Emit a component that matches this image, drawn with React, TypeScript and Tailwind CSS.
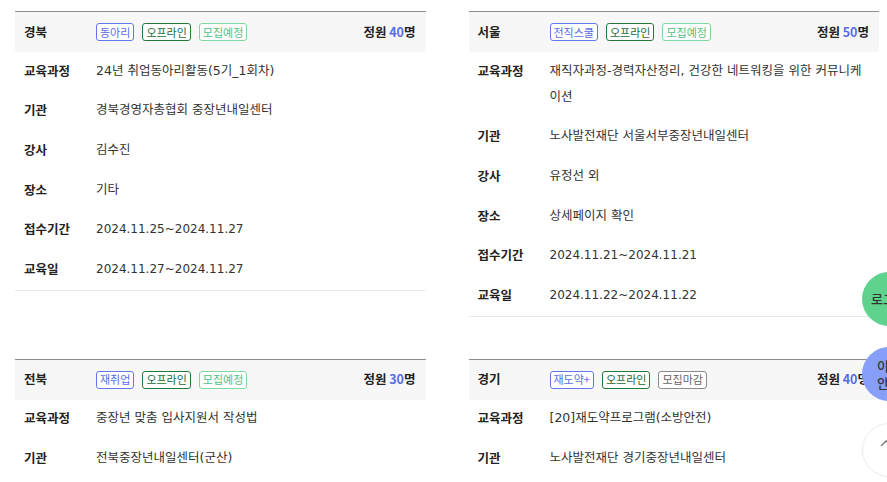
import React from "react";

type Badge = { text: string; tone: "blue" | "green" | "mint" | "gray" };
type Card = {
  region: string;
  badges: Badge[];
  count: string;
  rows: [string, string][];
};

const cards: Card[] = [
  {
    region: "경북",
    badges: [
      { text: "동아리", tone: "blue" },
      { text: "오프라인", tone: "green" },
      { text: "모집예정", tone: "mint" },
    ],
    count: "40",
    rows: [
      ["교육과정", "24년 취업동아리활동(5기_1회차)"],
      ["기관", "경북경영자총협회 중장년내일센터"],
      ["강사", "김수진"],
      ["장소", "기타"],
      ["접수기간", "2024.11.25~2024.11.27"],
      ["교육일", "2024.11.27~2024.11.27"],
    ],
  },
  {
    region: "서울",
    badges: [
      { text: "전직스쿨", tone: "blue" },
      { text: "오프라인", tone: "green" },
      { text: "모집예정", tone: "mint" },
    ],
    count: "50",
    rows: [
      ["교육과정", "재직자과정-경력자산정리, 건강한 네트워킹을 위한 커뮤니케이션"],
      ["기관", "노사발전재단 서울서부중장년내일센터"],
      ["강사", "유정선 외"],
      ["장소", "상세페이지 확인"],
      ["접수기간", "2024.11.21~2024.11.21"],
      ["교육일", "2024.11.22~2024.11.22"],
    ],
  },
  {
    region: "전북",
    badges: [
      { text: "재취업", tone: "blue" },
      { text: "오프라인", tone: "green" },
      { text: "모집예정", tone: "mint" },
    ],
    count: "30",
    rows: [
      ["교육과정", "중장년 맞춤 입사지원서 작성법"],
      ["기관", "전북중장년내일센터(군산)"],
      ["강사", "김선영"],
      ["장소", "전북중장년내일센터(군산)"],
    ],
  },
  {
    region: "경기",
    badges: [
      { text: "재도약+", tone: "blue" },
      { text: "오프라인", tone: "green" },
      { text: "모집마감", tone: "gray" },
    ],
    count: "40",
    rows: [
      ["교육과정", "[20]재도약프로그램(소방안전)"],
      ["기관", "노사발전재단 경기중장년내일센터"],
      ["강사", "홍길동"],
      ["장소", "상세페이지 확인"],
    ],
  },
];

const toneClass: Record<Badge["tone"], string> = {
  blue: "border-[#6577f0] text-[#5a6be6]",
  green: "border-[#217a3c] text-[#1d6a33]",
  mint: "border-[#7fd8a2] text-[#4fbf7f]",
  gray: "border-[#8a8a8a] text-[#666666]",
};

const FONT = '"DejaVu Sans", "Noto Sans CJK KR", sans-serif';
const CJK_FONT = '"Noto Sans CJK KR", sans-serif';

const isDate = (v: string) => /^[0-9.~]+$/.test(v);

function CardView({ card }: { card: Card }) {
  return (
    <div className="border-t border-[#8c8c8c] border-b border-b-[#e8e8e8]">
      <div
        className="flex h-[40px] items-center bg-[#f7f7f7] pl-[9px] pr-[10px]"
        style={{ fontFamily: CJK_FONT }}
      >
        <div className="w-[72px] text-[12.5px] font-bold text-[#222]">{card.region}</div>
        <div className="flex gap-[8px]">
          {card.badges.map((b) => (
            <span
              key={b.text}
              className={`flex h-[18px] items-center rounded-[3px] border bg-white px-[3px] text-[11px] leading-none ${toneClass[b.tone]}`}
            >
              {b.text}
            </span>
          ))}
        </div>
        <div className="ml-auto text-[12.5px] font-bold text-[#222]">
          정원 <span className="text-[#5a6be6]">{card.count}</span>명
        </div>
      </div>
      <div className="pl-[9px] pr-[10px]">
        {card.rows.map(([k, v]) => (
          <div key={k} className="flex pb-[7.8px] pt-[5.8px] text-[12.5px] leading-[26px]">
            <div className="w-[72px] shrink-0 font-bold text-[#222]" style={{ fontFamily: CJK_FONT }}>
              {k}
            </div>
            <div
              className={`min-w-0 flex-1 break-all text-[#333] ${isDate(v) ? "text-[12px]" : "text-[12.5px]"}`}
            >
              {v}
            </div>
          </div>
        ))}
      </div>
    </div>
  );
}

export default function App() {
  return (
    <div
      className="relative h-[482px] w-[887px] overflow-hidden bg-white"
      style={{ fontFamily: FONT }}
    >
      <div className="ml-[15px] grid w-[864px] grid-cols-2 items-start gap-x-[43px] gap-y-[42px] pt-[11px]">
        {cards.map((c) => (
          <CardView key={c.region} card={c} />
        ))}
      </div>

      <div
        className="absolute left-[862px] top-[272px] flex h-[54px] w-[54px] items-center justify-center rounded-full bg-[#5fd28e] text-[13px] font-medium text-[#333]"
        style={{ fontFamily: CJK_FONT }}
      >
        로그인
      </div>
      <div
        className="absolute left-[862px] top-[347px] flex h-[54px] w-[54px] flex-col items-center justify-center rounded-full bg-[#879ff9] text-[13px] font-medium leading-[17px] text-[#333]"
        style={{ fontFamily: CJK_FONT }}
      >
        <span>이용</span>
        <span>안내</span>
      </div>
      <div className="absolute left-[862px] top-[423px] h-[54px] w-[54px] rounded-full border border-[#ececec] bg-white">
        <svg width="12" height="8" viewBox="0 0 12 8" className="ml-[17px] mt-[15px]">
          <path d="M1 7 L6 2 L11 7" fill="none" stroke="#777" strokeWidth="1.3" />
        </svg>
      </div>
    </div>
  );
}
